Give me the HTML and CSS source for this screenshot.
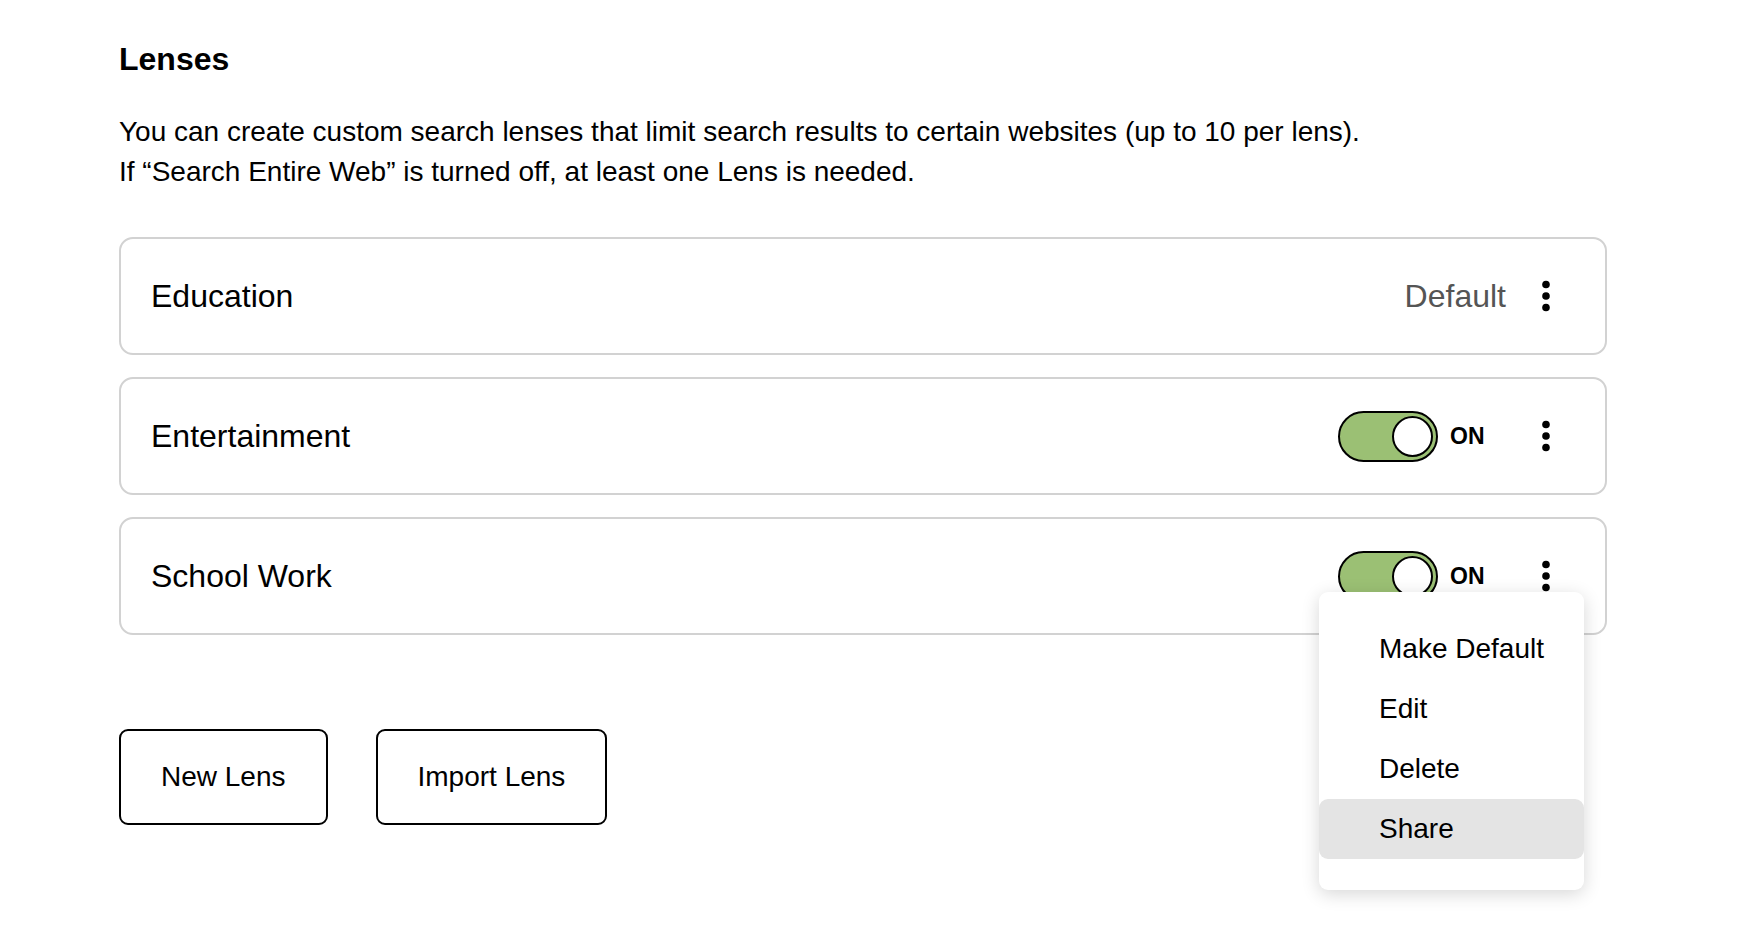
FILE: index.html
```html
<!DOCTYPE html>
<html lang="en">
<head>
    <meta charset="UTF-8">
    <meta name="viewport" content="width=device-width, initial-scale=1.0">
    <title>Lenses</title>
    <link rel="stylesheet" href="styles.css">
</head>
<body>

<div class="page">
    <h2>Lenses</h2>
    <p class="intro">
        You can create custom search lenses that limit search results to certain websites (up to 10 per lens).<br>
        If &ldquo;Search Entire Web&rdquo; is turned off, at least one Lens is needed.
    </p>

    <div class="lens-list">
        <div class="lens">
            <span class="lens-name">Education</span>
            <span class="lens-default">Default</span>
            <div class="more">
                <button class="more-btn" aria-label="More">
                    <svg width="8" height="32" viewBox="0 0 8 32"><circle cx="4" cy="4.5" r="3.8"/><circle cx="4" cy="16" r="3.8"/><circle cx="4" cy="27.5" r="3.8"/></svg>
                </button>
            </div>
        </div>

        <div class="lens">
            <span class="lens-name">Entertainment</span>
            <label class="switch">
                <input type="checkbox" checked>
                <span class="track"><span class="knob"></span></span>
                <span class="switch-label">ON</span>
            </label>
            <div class="more">
                <button class="more-btn" aria-label="More">
                    <svg width="8" height="32" viewBox="0 0 8 32"><circle cx="4" cy="4.5" r="3.8"/><circle cx="4" cy="16" r="3.8"/><circle cx="4" cy="27.5" r="3.8"/></svg>
                </button>
            </div>
        </div>

        <div class="lens lens-open">
            <span class="lens-name">School Work</span>
            <label class="switch">
                <input type="checkbox" checked>
                <span class="track"><span class="knob"></span></span>
                <span class="switch-label">ON</span>
            </label>
            <div class="more">
                <button class="more-btn" aria-label="More">
                    <svg width="8" height="32" viewBox="0 0 8 32"><circle cx="4" cy="4.5" r="3.8"/><circle cx="4" cy="16" r="3.8"/><circle cx="4" cy="27.5" r="3.8"/></svg>
                </button>
                <ul class="menu">
                    <li>Make Default</li>
                    <li>Edit</li>
                    <li>Delete</li>
                    <li class="active">Share</li>
                </ul>
            </div>
        </div>
    </div>

    <div class="actions">
        <button class="btn">New Lens</button>
        <button class="btn">Import Lens</button>
    </div>
</div>

</body>
</html>
```

FILE: styles.css
```css
body {
    margin: 0;
    font-family: "Liberation Sans", Arial, sans-serif;
    color: #000;
    background: #fff;
}
.page {
    min-height: 948px;
    box-sizing: border-box;
    padding: 40px 137px 0 119px;
}
h2 {
    margin: 0;
    font-size: 32px;
    line-height: 38px;
    font-weight: bold;
}
.intro {
    margin: 34px 0 0;
    font-size: 28px;
    line-height: 40px;
}
.lens-list {
    margin-top: 45px;
    display: flex;
    flex-direction: column;
    gap: 22px;
}
.lens {
    display: flex;
    align-items: center;
    height: 118px;
    box-sizing: border-box;
    padding: 0 35px 0 30px;
    border: 2px solid #d2d2d2;
    border-radius: 14px;
    background: #fff;
}
.lens-open {
    position: relative;
    z-index: 2;
}
.lens-name {
    flex: 1;
    font-size: 32px;
}
.lens-default {
    font-size: 32px;
    color: #555;
    margin-right: 16px;
}
.switch {
    display: flex;
    align-items: center;
    gap: 12px;
    margin-right: 16px;
}
.switch input {
    display: none;
}
.track {
    display: flex;
    align-items: center;
    justify-content: flex-end;
    width: 100px;
    height: 51px;
    box-sizing: border-box;
    padding: 0 3px;
    border: 2px solid #000;
    border-radius: 26px;
    background: #9bc074;
}
.knob {
    width: 41px;
    height: 41px;
    box-sizing: border-box;
    border: 2px solid #000;
    border-radius: 50%;
    background: #fff;
}
.switch-label {
    width: 56px;
    font-size: 23px;
    font-weight: bold;
}
.more {
    position: relative;
}
.more-btn {
    display: flex;
    align-items: center;
    justify-content: center;
    width: 48px;
    height: 48px;
    padding: 0;
    border: none;
    background: none;
    cursor: pointer;
}
.more-btn svg {
    fill: #000;
}
.menu {
    position: absolute;
    top: 40px;
    right: -14px;
    width: 265px;
    margin: 0;
    padding: 27px 0 31px;
    list-style: none;
    background: #fff;
    border-radius: 9px;
    box-shadow: 0 4px 18px rgba(0, 0, 0, 0.16);
}
.menu li {
    height: 60px;
    line-height: 60px;
    padding-left: 60px;
    font-size: 28px;
    border-radius: 9px;
}
.menu li.active {
    background: #e4e4e4;
}
.actions {
    margin-top: 94px;
    display: flex;
    gap: 48px;
}
.btn {
    height: 96px;
    padding: 0 40px;
    font-family: "Liberation Sans", Arial, sans-serif;
    font-size: 28px;
    color: #000;
    background: #fff;
    border: 2px solid #000;
    border-radius: 9px;
    cursor: pointer;
}
```
